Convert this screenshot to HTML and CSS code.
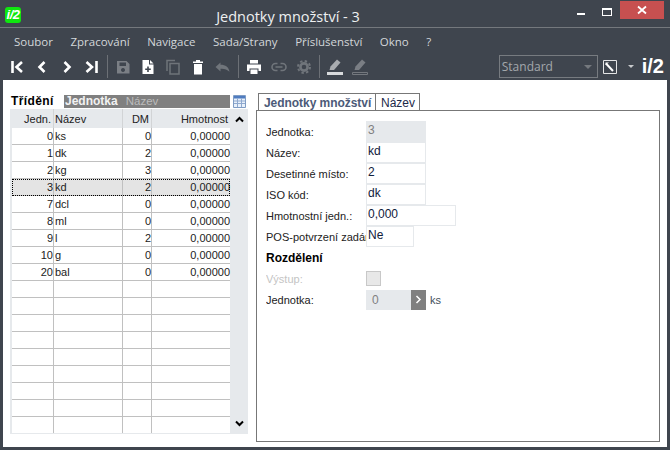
FILE: index.html
```html
<!DOCTYPE html>
<html lang="cs">
<head>
  <meta charset="UTF-8" />
  <title>Jednotky množství - 3</title>
  <link rel="stylesheet" href="styles.css">
</head>
<body>
  <div class="titlebar">
    <div class="logo">i/2</div>
    <div class="title">Jednotky množství - 3</div>
    <div class="win-min"></div>
    <div class="win-max"></div>
    <div class="win-close">
      <svg width="10" height="10" viewBox="0 0 10 10"><path d="M1 1.5l8 7M9 1.5l-8 7" stroke="#fff" stroke-width="1.8" fill="none"/></svg>
    </div>
  </div>

  <div class="menu">
    <span>Soubor</span>
    <span>Zpracování</span>
    <span>Navigace</span>
    <span>Sada/Strany</span>
    <span>Příslušenství</span>
    <span>Okno</span>
    <span>?</span>
  </div>

  <div class="toolbar">
    <div class="tool"><svg width="16" height="16" viewBox="0 0 16 16"><path d="M3.500 2v12M13 3L7.500 8l5.500 5" class="nav"/></svg></div>
    <div class="tool"><svg width="16" height="16" viewBox="0 0 16 16"><path d="M10.500 3L5.500 8l5 5" class="nav"/></svg></div>
    <div class="tool"><svg width="16" height="16" viewBox="0 0 16 16"><path d="M5.500 3l5 5-5 5" class="nav"/></svg></div>
    <div class="tool"><svg width="16" height="16" viewBox="0 0 16 16"><path d="M2.500 3L8 8l-5.500 5M12.500 2v12" class="nav"/></svg></div>
    <div class="sep"></div>
    <div class="tool"><svg width="16" height="16" viewBox="0 0 16 16"><path d="M2 2h9.500L14.500 5v9.500H2zM4.500 3.500v3.500h6.500V3.500zM8 9a2 2 0 1 0 .01 0z" fill="#7b7f85" fill-rule="evenodd"/></svg></div>
    <div class="tool"><svg width="16" height="16" viewBox="0 0 16 16"><path d="M2.500 1h6.500v4.500h4.500V15H2.500z" fill="#fff"/><path d="M10 1l3.500 3.500H10z" fill="#fff"/><path d="M8 7.500v5.500M5.200 10.200h5.600" stroke="#3f454e" stroke-width="1.600"/></svg></div>
    <div class="tool"><svg width="16" height="16" viewBox="0 0 16 16"><path d="M2 12V1.500h8M5 4.500h9v10.500H5z" stroke="#6f747a" stroke-width="1.500" fill="none"/></svg></div>
    <div class="tool"><svg width="16" height="16" viewBox="0 0 16 16"><path d="M3 2.500h10V4H3zM6 1h4v1.500H6zM4 5h8v10.500H4z" fill="#fff"/></svg></div>
    <div class="tool"><svg width="16" height="16" viewBox="0 0 16 16"><path d="M5.500 3.500L.5 8l5 4.500V9.800c3.500-.3 6.500.5 9 3-.6-4.500-4-7-9-7z" fill="#70757b"/></svg></div>
    <div class="sep"></div>
    <div class="tool"><svg width="16" height="16" viewBox="0 0 16 16"><path d="M4 1h8v3.500H4zM1 5.500h14V12h-2.500V9.500h-9V12H1zM4.500 10.500h7V15h-7z" fill="#fff"/></svg></div>
    <div class="tool"><svg width="16" height="16" viewBox="0 0 16 16"><path d="M6.500 4.500H4.500a3.500 3.500 0 0 0 0 7h2M9.500 4.500h2a3.500 3.500 0 0 1 0 7h-2M4.500 8h7" stroke="#70757b" stroke-width="1.600" fill="none"/></svg></div>
    <div class="tool"><svg width="16" height="16" viewBox="0 0 16 16"><circle cx="8" cy="8" r="3.600" stroke="#70757b" stroke-width="2.600" fill="none"/><circle cx="8" cy="8" r="6" stroke="#70757b" stroke-width="2" stroke-dasharray="2.400 2.310" fill="none"/></svg></div>
    <div class="sep"></div>
    <div class="tool"><svg width="18" height="18" viewBox="0 0 18 18"><path d="M3.500 12l1-3.500 6.500-7 3.500 3-6.500 7.500z" fill="#a9acb0"/><path d="M1 14h16v3H1z" fill="#d8dadc"/></svg></div>
    <div class="tool"><svg width="18" height="18" viewBox="0 0 18 18"><path d="M3.500 12l1-3.500 6.500-7 3.500 3-6.500 7.500z" fill="#7a7e84"/><path d="M1.500 14.500h15v2h-15z" fill="none" stroke="#74787e"/></svg></div>
    <div class="combo">
      <span>Standard</span>
      <div class="combo-arrow"></div>
    </div>
    <div class="wrench">
      <svg width="14" height="14" viewBox="0 0 14 14"><path d="M.5.500h13v13H.5z" fill="none" stroke="#e4e5e6"/><path d="M3 3.500l7 7.500" stroke="#fff" stroke-width="2"/><path d="M2.500 5V2.500H6z" fill="#fff"/></svg>
    </div>
    <div class="small-arrow"></div>
    <div class="brand">i/2</div>
  </div>

  <div class="main">
    <div class="left">
      <div class="sort-row">
        <div class="sort-label">Třídění</div>
        <div class="sort-strip">
          <span class="sort-on">Jednotka</span>
          <span class="sort-off">Název</span>
        </div>
        <svg class="sort-icon" width="13" height="13" viewBox="0 0 13 13"><path d="M.5.500h12v12H.5z" fill="#e8f0fa" stroke="#7f9cc4"/><path d="M1 1h11v2.500H1z" fill="#4f7cc0"/><path d="M1 6h11M1 8.500h11M4.500 3.500V12M8.500 3.500V12" stroke="#8fa9cf"/></svg>
      </div>
      <div class="grid">
        <div class="grid-body">
          <div class="row head">
            <div class="num">Jedn.</div><div>Název</div><div class="num">DM</div><div class="num">Hmotnost</div>
          </div>
          <div class="row"><div class="num">0</div><div>ks</div><div class="num">0</div><div class="num">0,00000</div></div>
          <div class="row"><div class="num">1</div><div>dk</div><div class="num">2</div><div class="num">0,00000</div></div>
          <div class="row"><div class="num">2</div><div>kg</div><div class="num">3</div><div class="num">0,00000</div></div>
          <div class="row selected"><div class="num">3</div><div>kd</div><div class="num">2</div><div class="num">0,00000</div></div>
          <div class="row"><div class="num">7</div><div>dcl</div><div class="num">0</div><div class="num">0,00000</div></div>
          <div class="row"><div class="num">8</div><div>ml</div><div class="num">0</div><div class="num">0,00000</div></div>
          <div class="row"><div class="num">9</div><div>l</div><div class="num">2</div><div class="num">0,00000</div></div>
          <div class="row"><div class="num">10</div><div>g</div><div class="num">0</div><div class="num">0,00000</div></div>
          <div class="row"><div class="num">20</div><div>bal</div><div class="num">0</div><div class="num">0,00000</div></div>
          <div class="row"><div></div><div></div><div></div><div></div></div>
          <div class="row"><div></div><div></div><div></div><div></div></div>
          <div class="row"><div></div><div></div><div></div><div></div></div>
          <div class="row"><div></div><div></div><div></div><div></div></div>
          <div class="row"><div></div><div></div><div></div><div></div></div>
          <div class="row"><div></div><div></div><div></div><div></div></div>
          <div class="row"><div></div><div></div><div></div><div></div></div>
          <div class="row"><div></div><div></div><div></div><div></div></div>
          <div class="row"><div></div><div></div><div></div><div></div></div>
        </div>
        <div class="scrollbar">
          <svg width="9" height="7" viewBox="0 0 9 7"><path d="M1 5.500l3.500-3.500 3.500 3.500" stroke="#000" stroke-width="2" fill="none"/></svg>
          <svg width="9" height="7" viewBox="0 0 9 7"><path d="M1 1.500l3.500 3.500 3.500-3.500" stroke="#000" stroke-width="2" fill="none"/></svg>
        </div>
      </div>
    </div>

    <div class="right">
      <div class="tabs">
        <div class="tab active">Jednotky množství</div>
        <div class="tab">Název</div>
      </div>
      <div class="panel">
        <div class="form">
          <label>Jednotka:</label>
          <div class="field w60 locked">3</div>
          <label>Název:</label>
          <div class="field w60">kd</div>
          <label>Desetinné místo:</label>
          <div class="field w60">2</div>
          <label>ISO kód:</label>
          <div class="field w60">dk</div>
          <label>Hmotnostní jedn.:</label>
          <div class="field w90">0,000</div>
          <label>POS-potvrzení zadání</label>
          <div class="field w48">Ne</div>
          <div class="section">Rozdělení</div>
          <label class="muted">Výstup:</label>
          <div class="check"></div>
          <label>Jednotka:</label>
          <div class="unit">
            <div class="picker">
              <span>0</span>
              <div class="picker-btn">
                <svg width="7" height="9" viewBox="0 0 7 9"><path d="M1.500 1l3.500 3.500L1.500 8" stroke="#fff" stroke-width="1.500" fill="none"/></svg>
              </div>
            </div>
            <span class="unit-name">ks</span>
          </div>
        </div>
      </div>
    </div>
  </div>
</body>
</html>
```

FILE: styles.css
```css
html, body {
  height: 100%;
}

body {
  margin: 0;
  width: 670px;
  height: 450px;
  overflow: hidden;
  display: flex;
  flex-direction: column;
  background: #3f454e;
  font-family: "Liberation Sans", Arial, sans-serif;
  font-size: 11px;
  color: #1c1c1c;
}

/* title bar */
.titlebar {
  display: flex;
  height: 27px;
  border-bottom: 1px solid #74787d;
  flex-shrink: 0;
}

.logo {
  width: 16px;
  height: 16px;
  margin: 7px 0 0 5px;
  background: #0fe60f;
  border-radius: 3px;
  color: #fff;
  font-size: 13px;
  font-weight: bold;
  font-style: italic;
  line-height: 16px;
  text-align: center;
  letter-spacing: -0.5px;
}

.title {
  flex: 1;
  padding-right: 22px;
  font-family: "Open Sans", sans-serif;
  font-size: 14.5px;
  line-height: 34px;
  text-align: center;
  color: #eef0f1;
}

.win-min {
  width: 8px;
  height: 2px;
  margin: 13px 17px 0 0;
  background: #fff;
}

.win-max {
  width: 8px;
  height: 5px;
  margin: 8px 8px 0 0;
  border: 1px solid #fff;
  border-top-width: 2px;
}

.win-close {
  width: 44px;
  height: 18px;
  margin: 1px 6px 0 0;
  background: #c75050;
  display: flex;
  align-items: center;
  justify-content: center;
}

/* menu */
.menu {
  display: flex;
  gap: 17.500px;
  height: 27px;
  padding-left: 14px;
  align-items: center;
  flex-shrink: 0;
  font-family: "Open Sans", sans-serif;
  font-size: 11.5px;
  color: #d3d7da;
}

/* toolbar */
.toolbar {
  display: flex;
  align-items: center;
  height: 23px;
  margin-bottom: 2px;
  padding-left: 4px;
  flex-shrink: 0;
}

.tool {
  width: 25px;
  height: 23px;
  display: flex;
  align-items: center;
  justify-content: center;
}

.nav {
  fill: none;
  stroke: #fff;
  stroke-width: 2.6;
}

.sep {
  width: 1px;
  height: 23px;
  margin: 0 2px 0 3px;
  background: #6c7076;
}

.combo {
  width: 97px;
  height: 21px;
  margin-left: auto;
  border: 1px solid #777b80;
  display: flex;
  align-items: center;
  justify-content: space-between;
  color: #a4a8ac;
  font-family: "Open Sans", sans-serif;
  font-size: 12px;
}

.combo span {
  padding-left: 2px;
}

.combo-arrow {
  width: 0;
  height: 0;
  margin-right: 5px;
  border: 4px solid transparent;
  border-top: 4px solid #75797e;
  border-bottom: 0;
}

.wrench {
  display: flex;
  margin-left: 5px;
}

.small-arrow {
  width: 0;
  height: 0;
  margin-left: 11px;
  border: 3px solid transparent;
  border-top: 3px solid #c8cacc;
  border-bottom: 0;
}

.brand {
  margin: 0 6px 0 8px;
  color: #fff;
  font-size: 20px;
  font-weight: bold;
  line-height: 23px;
}

/* content */
.main {
  flex: 1;
  display: flex;
  margin: 0 3px 3px;
  padding: 13px 7px 0;
  background: #fff;
}

.left {
  width: 238px;
  margin-right: 8px;
}

.sort-row {
  display: flex;
  align-items: center;
  height: 16px;
}

.sort-label {
  width: 54px;
  padding-left: 1px;
  box-sizing: border-box;
  font-size: 12px;
  font-weight: bold;
  color: #000;
  letter-spacing: 0.4px;
}

.sort-strip {
  width: 166px;
  height: 13px;
  margin-top: 1px;
  background: #808080;
  display: flex;
  align-items: center;
  gap: 8px;
  line-height: 13px;
}

.sort-on {
  padding-left: 1px;
  font-size: 12px;
  font-weight: bold;
  color: #f2f2f2;
}

.sort-off {
  color: #bcbcbc;
  font-size: 11.5px;
}

.sort-icon {
  margin-left: 3px;
}

.grid {
  display: flex;
  background: #e6e9ec;
}

.grid-body {
  width: 218px;
  margin-left: 2px;
  margin-right: 1px;
  background: #fff;
}

.row {
  display: grid;
  grid-template-columns: 42px 69px 29px 78px;
  height: 17px;
  box-sizing: border-box;
  border-bottom: 1px solid #c0c0c0;
  line-height: 16px;
  color: #222;
}

.row > div {
  padding-left: 1px;
  border-right: 1px solid #c0c0c0;
  white-space: nowrap;
}

.row > div:last-child {
  border-right: 0;
}

.row .num {
  text-align: right;
  padding: 0;
}

.row.head {
  height: 19px;
  line-height: 20px;
  background: #e6e9ec;
  border-bottom: 0;
}

.row.head > div {
  border-right-color: #d2d4d6;
}

.row.head .num {
  padding-right: 2px;
}

.row.selected {
  background: #e4e4e4;
  outline: 1px dotted #000;
  outline-offset: -1px;
}

.row:last-child {
  border-bottom-color: #e6e9ec;
}

.scrollbar {
  width: 17px;
  display: flex;
  flex-direction: column;
  justify-content: space-between;
  align-items: center;
  padding: 7px 0;
  box-sizing: border-box;
}

/* right side */
.right {
  width: 404px;
  display: flex;
  flex-direction: column;
  height: 349px;
}

.tabs {
  display: flex;
  padding-left: 2px;
  height: 17px;
}

.tab {
  padding: 0 4px 0 5px;
  border: 1px solid #777;
  border-bottom: 0;
  border-left: 0;
  font-size: 12px;
  line-height: 18px;
  color: #1c2a4a;
  white-space: nowrap;
}

.tab.active {
  width: 118px;
  box-sizing: border-box;
  padding: 0 0 0 5px;
  border-left: 1px solid #777;
  font-weight: bold;
  color: #4c5a78;
  background: #fff;
  letter-spacing: -0.05px;
}

.panel {
  flex: 1;
  border: 1px solid #777;
  padding: 10px 0 0 9px;
}

.form {
  display: grid;
  grid-template-columns: 100px 1fr;
  grid-auto-rows: 21px;
  align-items: center;
}

.form label {
  overflow: hidden;
  white-space: nowrap;
  color: #222;
}

.form label.muted {
  color: #c4c4c4;
}

.field {
  height: 21px;
  box-sizing: border-box;
  border: 1px solid #e6e9ec;
  padding-left: 1px;
  line-height: 17px;
  color: #10203c;
  font-size: 12px;
}

.w60 { width: 60px; }
.w90 { width: 90px; }
.w48 { width: 48px; }

.field.locked {
  background: #e6e9ec;
  color: #808080;
}

.section {
  grid-column: span 2;
  font-size: 12px;
  font-weight: bold;
  color: #000;
}

.check {
  width: 13px;
  height: 13px;
  background: #e8e8e8;
  border: 1px solid #c8c8c8;
}

.unit {
  display: flex;
  align-items: center;
}

.picker {
  width: 60px;
  height: 20px;
  background: #e6e9ec;
  display: flex;
  align-items: center;
  justify-content: space-between;
  padding-left: 6px;
  box-sizing: border-box;
  color: #808080;
  font-size: 12px;
}

.picker-btn {
  width: 15px;
  height: 20px;
  background: #808080;
  display: flex;
  align-items: center;
  justify-content: center;
}

.unit-name {
  margin-left: 4px;
  color: #44505c;
}
```
